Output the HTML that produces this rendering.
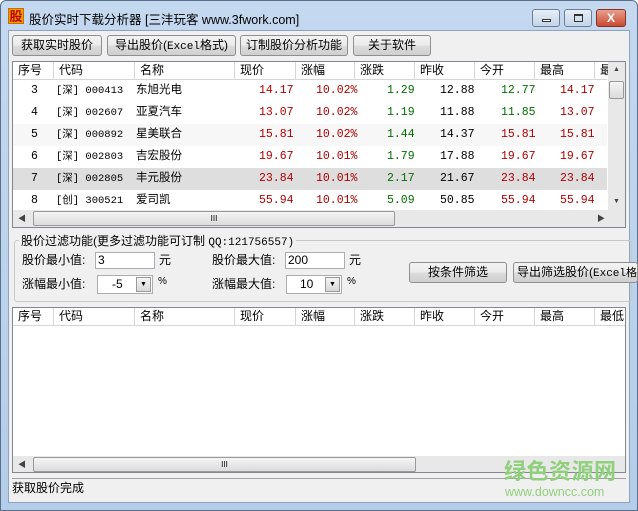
<!DOCTYPE html>
<html><head><meta charset="utf-8"><style>
*{box-sizing:border-box;margin:0;padding:0}
body{width:638px;height:511px;overflow:hidden;background:#fff;font-family:"Liberation Sans","Noto Sans CJK SC",sans-serif;font-size:12px;color:#000;position:relative}
.abs{position:absolute}
#frame{left:0;top:0;width:638px;height:511px;background:linear-gradient(#c4d9f0,#b4cde8);border:1px solid #5a6f8a;border-radius:6px 6px 0 0}
#client{left:8px;top:30px;width:622px;height:473px;background:#f0f0f0;border:1px solid #8ea3bd}
.btn{position:absolute;height:21px;border:1px solid #8e8f8f;border-radius:3px;background:linear-gradient(#f3f3f3 0%,#ebebeb 50%,#dddddd 51%,#cfcfcf 100%);text-align:center;line-height:19px;font-size:12px}
.list{position:absolute;background:#fff;border:1px solid #828790}
.hdr{position:absolute;left:0;top:0;height:18px;background:#fff;border-bottom:1px solid #d5d5d5}
.hc{position:absolute;top:0;height:18px;line-height:17px;padding-left:5px;border-right:1px solid #d5d5d5}
.row{position:absolute;left:0;height:22px;line-height:22px;width:594px}
.c{position:absolute;top:0;font-family:"Liberation Mono","Noto Sans CJK SC",monospace;font-size:11.5px}
.k{font-size:10.5px}
.r{color:#b00000}.g{color:#007000}
.sb{background:#e8e8e8}
.thumb{position:absolute;background:linear-gradient(#f4f4f4,#dcdcdc);border:1px solid #9a9a9a;border-radius:2px}
.tb{position:absolute;background:#fff;border:1px solid #abadb3;height:17px;padding-left:2px;line-height:15px}
.wb{position:absolute;top:9px;height:18px;border:1px solid #6f7f93;border-radius:3px;background:linear-gradient(#e6eef8,#c5d5e8)}
</style></head><body>
<div id="frame" class="abs"></div>
<div class="abs" style="left:8px;top:8px;width:16px;height:16px;background:#f0a000;color:#c00000;font-weight:bold;font-size:13px;line-height:16px;text-align:center;border:1px solid #c07000">股</div>
<div class="abs" style="left:29px;top:9px;font-size:12.5px">股价实时下载分析器 [三沣玩客 www.3fwork.com]</div>
<div class="wb" style="left:532px;width:28px"><div class="abs" style="left:9px;top:9px;width:9px;height:3px;border:1px solid #333;background:#fff"></div></div>
<div class="wb" style="left:564px;width:28px"><div class="abs" style="left:9px;top:4px;width:9px;height:8px;border:1px solid #333;border-top-width:2px"></div></div>
<div class="wb" style="left:596px;width:30px;background:linear-gradient(#e8a090,#c84a30);border-color:#8a3020;color:#fff;font-weight:bold;text-align:center;line-height:16px">X</div>
<div id="client" class="abs"></div>

<div class="btn" style="left:12px;top:35px;width:90px">获取实时股价</div>
<div class="btn" style="left:107px;top:35px;width:129px">导出股价(<span style="font-family:'Liberation Mono';font-size:11px">Excel</span>格式)</div>
<div class="btn" style="left:240px;top:35px;width:108px">订制股价分析功能</div>
<div class="btn" style="left:353px;top:35px;width:78px">关于软件</div>

<div class="list" style="left:12px;top:61px;width:614px;height:167px;overflow:hidden">
 <div class="hdr" style="width:594px">
  <div class="hc" style="left:0;width:41px">序号</div><div class="hc" style="left:41px;width:81px">代码</div><div class="hc" style="left:122px;width:100px">名称</div><div class="hc" style="left:222px;width:61px">现价</div><div class="hc" style="left:283px;width:59px">涨幅</div><div class="hc" style="left:342px;width:60px">涨跌</div><div class="hc" style="left:402px;width:60px">昨收</div><div class="hc" style="left:462px;width:60px">今开</div><div class="hc" style="left:522px;width:60px">最高</div><div class="hc" style="left:582px;width:20px;border:0">最</div>
 </div>
 <div class="row" style="top:18px"><span class="c" style="left:18px">3</span><span class="c k" style="left:43px">[深] 000413</span><span class="c" style="left:123px">东旭光电</span><span class="c r" style="left:246px">14.17</span><span class="c r" style="left:303px">10.02%</span><span class="c g" style="left:374px">1.29</span><span class="c" style="left:427px">12.88</span><span class="c g" style="left:488px">12.77</span><span class="c r" style="left:547px">14.17</span></div>
 <div class="row" style="top:40px"><span class="c" style="left:18px">4</span><span class="c k" style="left:43px">[深] 002607</span><span class="c" style="left:123px">亚夏汽车</span><span class="c r" style="left:246px">13.07</span><span class="c r" style="left:303px">10.02%</span><span class="c g" style="left:374px">1.19</span><span class="c" style="left:427px">11.88</span><span class="c g" style="left:488px">11.85</span><span class="c r" style="left:547px">13.07</span></div>
 <div class="row" style="top:62px;background:#f7f7f7"><span class="c" style="left:18px">5</span><span class="c k" style="left:43px">[深] 000892</span><span class="c" style="left:123px">星美联合</span><span class="c r" style="left:246px">15.81</span><span class="c r" style="left:303px">10.02%</span><span class="c g" style="left:374px">1.44</span><span class="c" style="left:427px">14.37</span><span class="c r" style="left:488px">15.81</span><span class="c r" style="left:547px">15.81</span></div>
 <div class="row" style="top:84px"><span class="c" style="left:18px">6</span><span class="c k" style="left:43px">[深] 002803</span><span class="c" style="left:123px">吉宏股份</span><span class="c r" style="left:246px">19.67</span><span class="c r" style="left:303px">10.01%</span><span class="c g" style="left:374px">1.79</span><span class="c" style="left:427px">17.88</span><span class="c r" style="left:488px">19.67</span><span class="c r" style="left:547px">19.67</span></div>
 <div class="row" style="top:106px;background:#dedede"><span class="c" style="left:18px">7</span><span class="c k" style="left:43px">[深] 002805</span><span class="c" style="left:123px">丰元股份</span><span class="c r" style="left:246px">23.84</span><span class="c r" style="left:303px">10.01%</span><span class="c g" style="left:374px">2.17</span><span class="c" style="left:427px">21.67</span><span class="c r" style="left:488px">23.84</span><span class="c r" style="left:547px">23.84</span></div>
 <div class="row" style="top:128px"><span class="c" style="left:18px">8</span><span class="c k" style="left:43px">[创] 300521</span><span class="c" style="left:123px">爱司凯</span><span class="c r" style="left:246px">55.94</span><span class="c r" style="left:303px">10.01%</span><span class="c g" style="left:374px">5.09</span><span class="c" style="left:427px">50.85</span><span class="c r" style="left:488px">55.94</span><span class="c r" style="left:547px">55.94</span></div>
 <div class="abs sb" style="left:595px;top:0;width:17px;height:148px"><div class="abs" style="left:5px;top:4px;font-size:7px;color:#444">▲</div><div class="thumb" style="left:1px;top:19px;width:15px;height:18px"></div><div class="abs" style="left:5px;top:136px;font-size:7px;color:#444">▼</div></div>
 <div class="abs sb" style="left:0;top:148px;width:612px;height:17px"><div class="abs" style="left:5px;top:3px;font-size:8px;color:#444">◀</div><div class="thumb" style="left:20px;top:1px;width:362px;height:15px;text-align:center;font-size:8px;line-height:13px">III</div><div class="abs" style="left:584px;top:3px;font-size:8px;color:#444">▶</div></div>
</div>

<div class="abs" style="left:14px;top:240px;width:618px;height:62px;border:1px solid #c8c8c8;border-radius:3px"></div>
<div class="abs" style="left:19px;top:232px;background:#f0f0f0;padding:0 2px">股价过滤功能(更多过滤功能可订制 <span style="font-family:'Liberation Mono';font-size:11px">QQ:121756557)</span></div>
<div class="abs" style="left:22px;top:251px">股价最小值:</div>
<div class="tb" style="left:95px;top:252px;width:60px">3</div>
<div class="abs" style="left:159px;top:251px">元</div>
<div class="abs" style="left:212px;top:251px">股价最大值:</div>
<div class="tb" style="left:285px;top:252px;width:60px">200</div>
<div class="abs" style="left:349px;top:251px">元</div>
<div class="abs" style="left:22px;top:275px">涨幅最小值:</div>
<div class="tb" style="left:97px;top:275px;width:56px;height:19px;line-height:17px;padding-left:14px">-5<div class="abs" style="right:1px;top:1px;width:15px;height:15px;background:linear-gradient(#f4f4f4,#d8d8d8);border:1px solid #999;font-size:7px;text-align:center;line-height:13px;padding:0">▼</div></div>
<div class="abs" style="left:158px;top:276px;font-size:10px">%</div>
<div class="abs" style="left:212px;top:275px">涨幅最大值:</div>
<div class="tb" style="left:286px;top:275px;width:56px;height:19px;line-height:17px;padding-left:13px">10<div class="abs" style="right:1px;top:1px;width:15px;height:15px;background:linear-gradient(#f4f4f4,#d8d8d8);border:1px solid #999;font-size:7px;text-align:center;line-height:13px;padding:0">▼</div></div>
<div class="abs" style="left:347px;top:276px;font-size:10px">%</div>
<div class="btn" style="left:409px;top:262px;width:98px">按条件筛选</div>
<div class="btn" style="left:513px;top:262px;width:125px;text-align:left;padding-left:3px;white-space:nowrap;overflow:hidden">导出筛选股价(<span style="font-family:'Liberation Mono';font-size:11px">Excel格</span></div>

<div class="list" style="left:12px;top:307px;width:614px;height:166px;overflow:hidden">
 <div class="hdr" style="width:612px">
  <div class="hc" style="left:0;width:41px">序号</div><div class="hc" style="left:41px;width:81px">代码</div><div class="hc" style="left:122px;width:100px">名称</div><div class="hc" style="left:222px;width:61px">现价</div><div class="hc" style="left:283px;width:59px">涨幅</div><div class="hc" style="left:342px;width:60px">涨跌</div><div class="hc" style="left:402px;width:60px">昨收</div><div class="hc" style="left:462px;width:60px">今开</div><div class="hc" style="left:522px;width:60px">最高</div><div class="hc" style="left:582px;width:30px;border:0">最低</div>
 </div>
 <div class="abs sb" style="left:0;top:148px;width:612px;height:17px"><div class="abs" style="left:5px;top:3px;font-size:8px;color:#444">◀</div><div class="thumb" style="left:20px;top:1px;width:383px;height:15px;text-align:center;font-size:8px;line-height:13px">III</div></div>
</div>

<div class="abs" style="left:12px;top:478px;width:614px;border-top:1px solid #a0a0a0"></div>
<div class="abs" style="left:12px;top:479px">获取股价完成</div>
<div class="abs" style="left:504px;top:454px;font-size:22px;font-weight:bold;color:#90d07c;letter-spacing:0.5px">绿色资源网</div>
<div class="abs" style="left:505px;top:485px;font-size:12.5px;color:#90d07c">www.downcc.com</div>
</body></html>
